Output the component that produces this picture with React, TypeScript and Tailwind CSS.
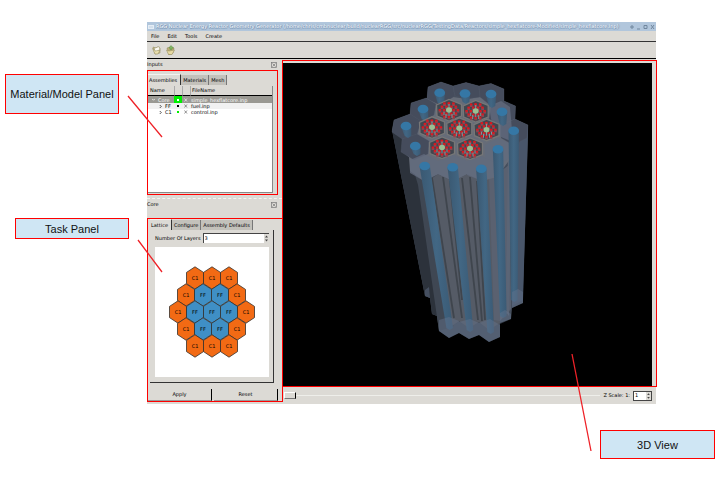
import { ReactNode } from "react";

const hexRows: { y: number; start: number; cells: string[] }[] = [
  { y: 278, start: 195, cells: ["C1", "C1", "C1"] },
  { y: 295, start: 186, cells: ["C1", "FF", "FF", "C1"] },
  { y: 312, start: 178, cells: ["C1", "FF", "FF", "FF", "C1"] },
  { y: 329, start: 186, cells: ["C1", "FF", "FF", "C1"] },
  { y: 346, start: 195, cells: ["C1", "C1", "C1"] },
];

function hex(cx: number, cy: number, w: number, h: number) {
  return [
    [cx, cy - h],
    [cx + w, cy - h / 2],
    [cx + w, cy + h / 2],
    [cx, cy + h],
    [cx - w, cy + h / 2],
    [cx - w, cy - h / 2],
  ]
    .map((p) => p.join(","))
    .join(" ");
}

function Lattice() {
  return (
    <svg viewBox="155 247 114 130" className="block h-[130px] w-full bg-white" role="img" aria-label="Core lattice">
      {hexRows.map((row) =>
        row.cells.map((cell, i) => {
          const x = row.start + i * 17;
          return (
            <g key={`${row.y}-${i}`}>
              <polygon
                points={hex(x, row.y, 8.5, 11.2)}
                fill={cell === "C1" ? "#f26a14" : "#3f8fc5"}
                stroke="#33302c"
                strokeWidth="0.8"
              />
              <text x={x} y={row.y + 2} textAnchor="middle" fontSize="5" fill="#000">
                {cell}
              </text>
            </g>
          );
        })
      )}
    </svg>
  );
}

const rods = [
  { x: 439.7, y: 92.7, bx: 441, by: 103 },
  { x: 465, y: 93.5, bx: 466, by: 102 },
  { x: 491, y: 94, bx: 492, by: 106 },
  { x: 423, y: 109, bx: 425, by: 119 },
  { x: 502, y: 111.7, bx: 503, by: 124 },
  { x: 406, y: 126, bx: 408, by: 136 },
  { x: 415.3, y: 146, bx: 417, by: 154 },
  { x: 513.7, y: 130.7, bx: 514.3, by: 300 },
  { x: 498, y: 149.3, bx: 503.3, by: 316 },
  { x: 424.7, y: 166, bx: 449.7, by: 328 },
  { x: 452.7, y: 167.3, bx: 470, by: 330 },
  { x: 481.3, y: 168.7, bx: 490.7, by: 332 },
];

const fuel = [
  [449, 110],
  [475.7, 111],
  [432, 127.3],
  [459.3, 128.3],
  [486.5, 129.7],
  [442, 147.5],
  [470, 148.5],
];

const pins = Array.from({ length: 6 }, (_, i) => [
  [Math.cos((i * Math.PI) / 3) * 4.8, Math.sin((i * Math.PI) / 3) * 4],
  [Math.cos((i * Math.PI) / 3) * 9, Math.sin((i * Math.PI) / 3) * 7.6],
  [Math.cos((i * Math.PI) / 3 + 0.52) * 8, Math.sin((i * Math.PI) / 3 + 0.52) * 6.8],
]).flat();

function ReactorView() {
  return (
    <svg
      viewBox="283 63 369 323"
      className="block h-[323px] min-w-0 flex-1 bg-black"
      role="img"
      aria-label="Reactor core 3D model"
    >
      <defs>
        <linearGradient id="rod" x1="0" x2="1" y1="0" y2="0">
          <stop offset="0" stopColor="#3a5871" />
          <stop offset="0.5" stopColor="#426784" />
          <stop offset="1" stopColor="#3a5a75" />
        </linearGradient>
      </defs>
      <polygon
        fill="#454e5c"
        points="428,87 441,82 453,86 466,82.500 479,86 491,83.500 504,89 504,101 515.500,106 515,119 528,125 528,137 523,290 523,303 512,308 511,319 500,323 500,337 489,342 479,335 469,339 459,333 449,338 439,331 437,316 432,314 430,298 425,296 392,130 394,120 410,114 411,103 427,98"
      />
      <polygon fill="#2c323b" points="392,130 403,138 403,150 410,158 424,176 443,325 437,316 432,314 430,298 425,296" />
      <polygon fill="#3f4753" points="410,158 424,180 434,183 454,326 439,331 418,185" />
      <polygon fill="#555b66" points="430,180 438,174 453,181 467,174 482,181 497,174 500,323 489,330 479,322 469,328 459,321 449,328" />
      <g stroke="#3f454d" strokeWidth="1.800" fill="none">
        <path d="M432 178L454 318M443 177L462 318M450 181L462 300M462 178L478 320M470 177L482 321M477 181L485 320" />
      </g>
      <polygon fill="#5a6170" points="489,178 497,174 509,165 511,309 500,321 494,320" />
      <polygon fill="#49566a" points="515,150 528,127 523,300 512,306" />
      <polygon fill="#5b6576" points="508,145 512,142 509,316 506,312" />
      <polygon
        fill="#666c78"
        points="403,137 410,114 427,98 440,105 453,97 467,99 480,97 502,105 515,113 513,142 511,158 497,177 482,181 467,174 453,181 438,174 424,181 410,171 409,157 402,151"
      />
      <g fill="#454c5c" stroke="#596171" strokeOpacity="0.5" strokeWidth="0.500">
        <polygon points="428,87 441,82 453,86 455,96 440,105 427,99" />
        <polygon points="453,86 466,82.500 479,86 480,97 467,99 455,96" />
        <polygon points="479,86 491,83.500 504,89 504,101 491,106 480,97" />
        <polygon points="411,103 426,98 436,104 434,115 421,123 410,115" />
        <polygon points="504,101 515.500,106 515,119 501,125 489,119 491,106" />
        <polygon points="394,120 410,114 421,121 417,135 405,141 392,132" />
        <polygon points="515,119 528,125 527,138 513,145 501,138 501,125" />
        <polygon points="402,139 417,134 429,141 428,154 414,160 401,152" />
      </g>
      <g fill="#626b7e" opacity="0.8">
        <polygon points="410,160 424,154 438,161 438,174 424,181 410,173" />
        <polygon points="438,161 453,155 467,161 467,174 453,181 438,174" />
        <polygon points="467,161 481,156 496,162 496,176 482,181 467,175" />
        <polygon points="485,145 498,138 511,144 511,158 498,164 485,158" />
        <polygon points="489,106 501,101 510,107 513,142 501,137 491,119" />
      </g>
      {rods.map((r) => (
        <g key={`${r.x}-${r.y}`}>
          <polygon
            points={`${r.x - 5.2},${r.y} ${r.x + 5.2},${r.y} ${r.bx + 3.3},${r.by} ${r.bx},${r.by + 2} ${r.bx - 3.3},${r.by}`}
            fill="url(#rod)"
          />
          <ellipse cx={r.x} cy={r.y} rx="5.400" ry="4.300" fill="#3577a5" />
        </g>
      ))}
      {fuel.map(([x, y]) => (
        <g key={`${x}-${y}`}>
          <polygon
            points={`${x - 12.5},${y - 5} ${x},${y - 10.5} ${x + 12.5},${y - 5.5} ${x + 12.5},${y + 6} ${x},${y + 11} ${x - 12},${y + 6}`}
            fill="#414750"
            stroke="#777777"
            strokeWidth="1.300"
          />
          {pins.map(([px, py], i) => (
            <g key={i}>
              <rect x={x + px - 1.4} y={y + py} width="2.800" height="2.600" fill="#8b4650" />
              <rect x={x + px - 1.3} y={y + py - 1} width="2.400" height="1.800" fill="#e3151c" />
            </g>
          ))}
          <path
            d={`M${x - 5} ${y + 5}v-3M${x + 5} ${y + 5}v-3M${x} ${y - 6}v12M${x - 3} ${y + 4}v4M${x + 3} ${y + 4}v4`}
            stroke="#81969b"
            strokeWidth="1"
          />
          <ellipse cx={x} cy={y} rx="3" ry="2.700" fill="#9bbd91" />
        </g>
      ))}
      <g fill="#65748d" opacity="0.45">
        <polygon points="439,320 449,317 459,321 459,333 449,338 439,331" />
        <polygon points="459,322 470,319 479,323 479,335 469,339 459,333" />
        <polygon points="479,323 490,319 500,325 500,337 489,342 479,335" />
        <polygon points="500,313 505,310 511,314 511,319 500,324" />
        <polygon points="512,292 518,289 523,292 523,303 512,308" />
        <polygon points="425,290 429,287 430,298 425,296" />
      </g>
    </svg>
  );
}

function DockTitle({ children }: { children: ReactNode }) {
  return (
    <div className="flex h-[11px] items-center justify-between pr-[5px]">
      <span>{children}</span>
      <button aria-label={`Detach ${children}`} className="block">
        <svg viewBox="0 0 6 6" className="block size-[6px]" fill="none" stroke="#777" strokeWidth="0.7">
          <rect x="0.500" y="0.500" width="5" height="5" />
          <path d="M1.500 4.500l3-3M1.500 1.500l3 3" />
        </svg>
      </button>
    </div>
  );
}

function Tabs({ names }: { names: string[] }) {
  return (
    <div role="tablist" className="flex items-end">
      {names.map((name, i) => (
        <button
          key={name}
          role="tab"
          aria-selected={i === 0}
          className={
            i === 0
              ? "h-[11px] border-t border-r border-t-[#f2f2ef] border-r-[#333] bg-[#dcdad5] pr-[3px] pl-px"
              : "h-[10px] border-r border-r-[#777] bg-[#c3c1bb] px-[2px]"
          }
        >
          {name}
        </button>
      ))}
    </div>
  );
}

function SpinArrows() {
  return (
    <svg viewBox="0 0 5 9" className="block h-full w-[5px] bg-[#dcdad5]" fill="#444" aria-hidden="true">
      <path d="M1 3.500L2.500 1.500 4 3.500zM1 5.500h3L2.500 7.500z" />
    </svg>
  );
}

function TreeRow({ name, file, kind }: { name: string; file: string; kind: "core" | "fuel" | "control" }) {
  const core = kind === "core";
  return (
    <tr
      className={
        core ? "h-[7px] bg-[#9a9993] text-white" : kind === "fuel" ? "h-[6px] bg-[#f1f1f1]" : "h-[6px]"
      }
    >
      <td className={core ? "pl-[4px]" : "pl-[11px]"}>
        <span className="flex items-center gap-[3px]">
          <svg viewBox="0 0 4 4" className="size-[3px]" fill="none" stroke={core ? "#fff" : "#222"}>
            <path d={core ? "M0 1l2 2 2-2" : "M1 0l2 2-2 2"} />
          </svg>
          {name}
        </span>
      </td>
      <td className={core ? "bg-[#00f000]" : ""}>
        <span
          className={
            core
              ? "mx-auto block size-[2px] bg-white"
              : kind === "fuel"
                ? "mx-auto block size-[2px] bg-black"
                : "mx-auto block size-[2px] bg-[#00f000]"
          }
        />
      </td>
      <td>
        <svg viewBox="0 0 4 4" className="mx-auto size-[4px]" fill="none" stroke={core ? "#eee" : "#777"} strokeWidth="0.800">
          <path d="M0.500 0.500l2.500 3M3 0.500l-2.500 3" />
        </svg>
      </td>
      <td className="pl-px">{file}</td>
    </tr>
  );
}

function AppWindow() {
  return (
    <main className="flex min-w-0 flex-1 flex-col bg-[#dcdad5] font-['DejaVu_Sans',sans-serif] text-[5px] leading-[7px] text-black">
      <header className="flex h-[9px] items-center gap-[2px] bg-[#b1c6dc] px-px text-white">
        <span className="h-[4px] w-[6px] border border-[#e5edf5] bg-[#d3dfeb]" />
        <h1 className="min-w-0 flex-1 overflow-hidden text-[5px] whitespace-nowrap [text-shadow:1px_0_1px_#6684a8,0_1px_1px_#6684a8]">
          RGG Nuclear Energy Reactor Geometry Generator
          (/home/chris/cmbnuclear/build/nuclearRGG/src/nuclearRGG/TestingData/Reactors/simple_hexflatcore-Modified/simple_hexflatcore.inp)
        </h1>
        <svg viewBox="0 0 26 6" className="h-[6px] w-[26px] bg-[#b1c6dc]" fill="none" stroke="#71879e">
          <path d="M3 1v4M1 3h4M8 5h3M15 1.500h3v3h-3zM22 1l3 4m0-4l-3 4" />
        </svg>
      </header>
      <nav className="flex h-[11px] items-center gap-[8px] border-b border-[#333] pl-[4px]">
        <button>File</button>
        <button>Edit</button>
        <button>Tools</button>
        <button>Create</button>
      </nav>
      <div className="flex h-[17px] items-center gap-[5px] border-b border-black pl-[5px]">
        <button aria-label="Open" className="block">
          <svg viewBox="0 0 9 10" className="block h-[10px] w-[9px]" stroke="#8d8558" strokeWidth="0.500">
            <path d="M1 2l3 1 1-1 3 1v5L3 9z" fill="#d8cb93" />
            <path d="M2 3.500l5-2 1 3-4 3z" fill="#fbfaf2" />
            <path d="M0.500 3.500l3 2.500 4.500-1-2 4H3z" fill="#eadfae" />
          </svg>
        </button>
        <button aria-label="Import" className="block">
          <svg viewBox="0 0 9 10" className="block h-[10px] w-[9px]" stroke="#8d8558" strokeWidth="0.500">
            <path d="M1 3l3-1 4 1-1 5-4 2z" fill="#bcae74" />
            <path d="M0.500 5l2.500 1 5.500-1-2.500 4.500H2.500z" fill="#e6d9a2" />
            <path d="M4 4.500V3H3l2-2.500L7.500 3H6v1.500z" fill="#7fb562" stroke="#5d9146" />
          </svg>
        </button>
      </div>

      <div className="flex">
        <div className="flex w-[135px] shrink-0 flex-col">
          <DockTitle>Inputs</DockTitle>
          <section className="mr-[4px] flex h-[125px] flex-col border border-[#ff0000] pt-[3px] pr-[4px] pb-px">
            <Tabs names={["Assemblies", "Materials", "Mesh"]} />
            <div className="mt-px min-h-0 flex-1 border-r border-b border-[#888] bg-white">
              <table className="w-full table-fixed border-separate border-spacing-0 text-left">
                <colgroup>
                  <col className="w-[26px]" />
                  <col className="w-[8px]" />
                  <col className="w-[8px]" />
                  <col />
                </colgroup>
                <thead>
                  <tr className="h-[10px] bg-[#dcdad5]">
                    <th className="border-b border-b-black pl-[2px] font-normal">Name</th>
                    <th className="border-b border-l border-b-black border-l-[#aaa]" aria-label="Color" />
                    <th className="border-b border-l border-b-black border-l-[#aaa]" aria-label="Status" />
                    <th className="border-b border-l border-b-black border-l-[#aaa] pl-px font-normal">FileName</th>
                  </tr>
                </thead>
                <tbody className="leading-[6px]">
                  <TreeRow name="Core" file="simple_hexflatcore.inp" kind="core" />
                  <TreeRow name="FF" file="fuel.inp" kind="fuel" />
                  <TreeRow name="C1" file="control.inp" kind="control" />
                </tbody>
              </table>
            </div>
          </section>
          <div className="mt-[3px] border-t border-dashed border-[#f4f4f2]" />
          <DockTitle>Core</DockTitle>
          <section className="mt-[8px] flex h-[184px] w-[136px] flex-col border border-[#ff0000]">
            <div className="mr-[8px] ml-[2px] flex h-[164px] flex-col">
              <Tabs names={["Lattice", "Configure", "Assembly Defaults"]} />
              <div className="flex-1 border-r border-b border-[#333] pt-[3px] pr-[4px] pl-[5px]">
                <div className="flex h-[10px] items-center gap-[2px]">
                  <label htmlFor="layers" className="whitespace-nowrap">
                    Number Of Layers
                  </label>
                  <div className="flex h-[10px] min-w-0 flex-1 border-t border-l border-[#444] bg-white">
                    <input id="layers" defaultValue="3" className="min-w-0 flex-1 pl-px outline-none" />
                    <SpinArrows />
                  </div>
                </div>
                <div className="mt-[4px]">
                  <Lattice />
                </div>
              </div>
            </div>
            <div className="mt-auto mr-[4px] flex h-[12px] gap-[2px]">
              <button className="flex-1 border-r border-b border-r-black border-b-[#999]">Apply</button>
              <button className="flex-1 border-r border-b border-r-black border-b-[#999]">Reset</button>
            </div>
          </section>
        </div>

        <div className="flex min-w-0 flex-1 flex-col pt-px">
          <section className="-mr-px flex border border-[#ff0000] pt-[2px] pr-[4px]">
            <ReactorView />
          </section>
          <div className="flex h-[17px] items-center gap-[3px] pr-[4px] pl-[2px]">
            <input
              type="range"
              aria-label="Z scale slider"
              min="0"
              max="100"
              defaultValue="0"
              className="h-[7px] min-w-0 flex-1 appearance-none bg-[linear-gradient(#eeeeea,#eeeeea)] bg-[length:100%_1px] bg-center bg-no-repeat [&::-webkit-slider-thumb]:h-[7px] [&::-webkit-slider-thumb]:w-[12px] [&::-webkit-slider-thumb]:appearance-none [&::-webkit-slider-thumb]:border [&::-webkit-slider-thumb]:border-t-white [&::-webkit-slider-thumb]:border-r-black [&::-webkit-slider-thumb]:border-b-[#777] [&::-webkit-slider-thumb]:border-l-white [&::-webkit-slider-thumb]:bg-[#dcdad5]"
            />
            <label htmlFor="zscale" className="whitespace-nowrap">
              Z Scale: 1:
            </label>
            <div className="flex h-[10px] w-[19px] border border-[#444] bg-white">
              <input id="zscale" defaultValue="1" className="min-w-0 flex-1 pl-px outline-none" />
              <SpinArrows />
            </div>
          </div>
        </div>
      </div>
    </main>
  );
}

function Callout({ children, className }: { children: ReactNode; className: string }) {
  return (
    <p
      className={`flex items-center justify-center border border-[#ff0000] bg-[#cfe6f4] whitespace-nowrap text-[#111] ${className}`}
    >
      {children}
    </p>
  );
}

export default function App() {
  return (
    <div className="relative bg-white pt-[22px] pb-[24px] font-['Liberation_Sans',Arial,sans-serif] text-[11px] leading-[14px]">
      <div className="flex items-start">
        <aside className="flex w-[147px] shrink-0 flex-col gap-[104px] pt-[52px]">
          <Callout className="ml-[5px] h-[40px] w-[114px]">Material/Model Panel</Callout>
          <Callout className="ml-[15px] h-[21px] w-[114px]">Task Panel</Callout>
        </aside>
        <AppWindow />
        <div className="w-[66px] shrink-0" />
      </div>
      <div className="mt-[26px] flex justify-end pr-[7px]">
        <Callout className="h-[29px] w-[115px]">3D View</Callout>
      </div>
      <svg
        className="pointer-events-none absolute top-0 left-0 h-[483px] w-[722px]"
        viewBox="0 0 722 483"
        stroke="#ee2228"
        strokeWidth="1.300"
        aria-hidden="true"
      >
        <path d="M128 96L162 137M138 240L162 272M572 354L591 451" />
      </svg>
    </div>
  );
}
